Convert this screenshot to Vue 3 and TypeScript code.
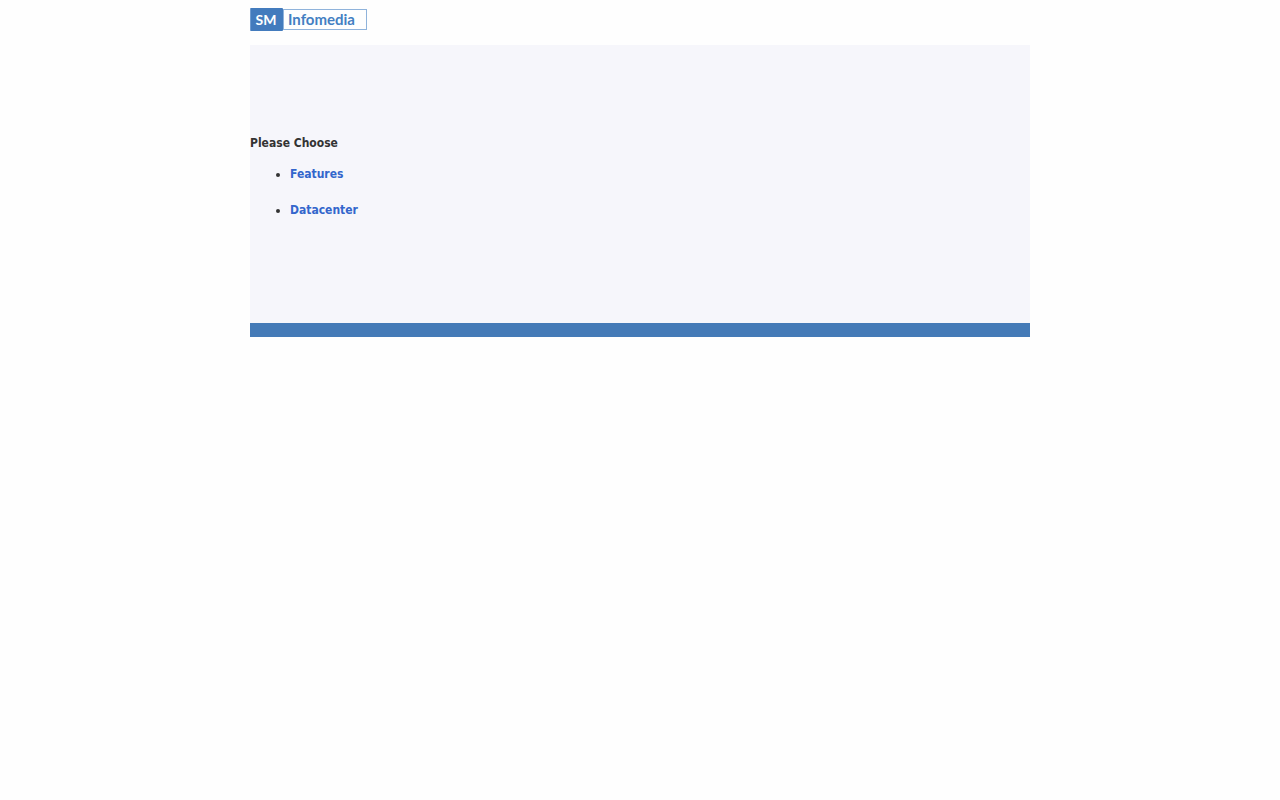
<script setup lang="ts">
interface Choice {
  label: string
  href: string
}

const choices: Choice[] = [
  { label: 'Features', href: '#features' },
  { label: 'Datacenter', href: '#datacenter' },
]
</script>

<template>
  <div class="page">
    <header class="header">
      <div class="logo">
        <span class="logo-mark">SM</span>
        <span class="logo-name">Infomedia</span>
      </div>
    </header>
    <main class="content">
      <h1 class="title">Please Choose</h1>
      <ul class="choices">
        <li v-for="choice in choices" :key="choice.label">
          <a :href="choice.href">{{ choice.label }}</a>
        </li>
      </ul>
    </main>
    <footer class="footer"></footer>
  </div>
</template>

<style>
body {
  margin: 0;
  background: #fefefe;
}
</style>

<style scoped>
.page {
  max-width: 780px;
  margin: 0 auto;
  padding-top: 8px;
  color: #333;
  font: 700 12px/18px Tahoma, "DejaVu Sans Condensed", "DejaVu Sans", sans-serif;
}

.header {
  padding-bottom: 14px;
}

.logo {
  display: flex;
  align-items: center;
  width: fit-content;
  font-family: Lato, sans-serif;
  white-space: nowrap;
}

.logo-mark {
  box-sizing: border-box;
  width: 33px;
  padding-right: 2px;
  border-left: 1px solid #6f9bd0;
  border-radius: 1px;
  background: #437bbd;
  color: #fff;
  font-size: 14px;
  line-height: 23px;
  text-align: center;
}

.logo-name {
  box-sizing: border-box;
  width: 84px;
  padding-left: 4px;
  border: 1px solid #8fb3db;
  background: #fefefe;
  color: #437fc2;
  font-size: 15px;
  line-height: 19px;
}

.content {
  padding: 89px 0 104px;
  background: #f6f6fb;
}

.title {
  margin: 0;
  font: inherit;
}

.choices {
  display: grid;
  gap: 18px;
  margin: 13px 0 0;
  padding-left: 40px;
}

.choices a {
  color: #3366cc;
  text-decoration: none;
}

.footer {
  height: 14px;
  background: #447ab7;
}
</style>
